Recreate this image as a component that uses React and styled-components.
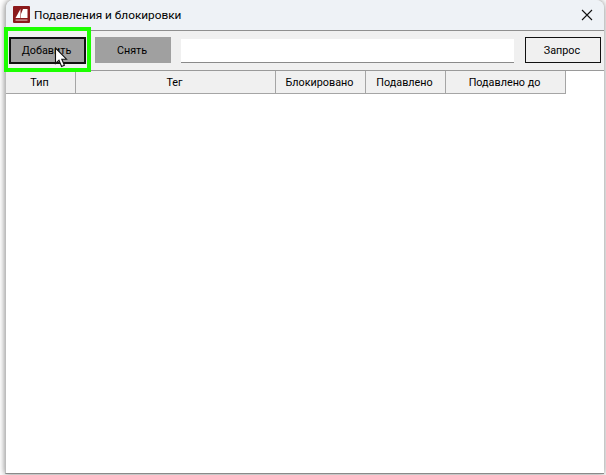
import styled, { createGlobalStyle } from "styled-components"

const GlobalStyle = createGlobalStyle`
  html, body { margin: 0; padding: 0; background: #fff; }
  body { font-family: Roboto, "Noto Sans", sans-serif; }
`

const Stage = styled.div`
  position: relative;
  width: 606px;
  height: 475px;
  overflow: hidden;
  background: #fff;
  padding: 0 2px 1px 5px;
  box-sizing: border-box;
`

const Window = styled.div`
  width: 599px;
  height: 474px;
  display: flex;
  flex-direction: column;
  background: #f0f0f0;
  border-radius: 8px 8px 0 0;
  border-bottom: 1px solid #8a8a8a;
  border-left: 1px solid #bdbdbd;
  box-shadow: 0 0 6px rgba(0, 0, 0, 0.5);
  box-sizing: border-box;
  overflow: hidden;
`

const TitleBar = styled.div`
  height: 31px;
  flex: none;
  display: flex;
  align-items: center;
  gap: 4px;
  padding: 0 11px 1px 7px;
  box-sizing: border-box;
  background: #eef2f6;
  border-bottom: 1px solid #8f8f8f;
`

const TitleText = styled.span`
  flex: 1;
  font-size: 11.8px;
  color: #000;
`

const Toolbar = styled.div`
  height: 39px;
  flex: none;
  display: flex;
  align-items: flex-start;
  padding: 6px 0 0 3px;
  box-sizing: border-box;
`

const Button = styled.button`
  width: ${p => p.$width}px;
  height: ${p => p.$height || 26}px;
  margin-right: ${p => p.$gap || 0}px;
  padding: 0 2px 0 0;
  flex: none;
  font-family: inherit;
  font-size: 10.8px;
  color: #000;
  background: ${p => p.$bg};
  border: ${p => p.$border};
`

const SearchInput = styled.div`
  width: 333px;
  height: 24px;
  margin: 2px 11px 0 0;
  flex: none;
  background: #fff;
  border-bottom: 1px solid #8a8a8a;
  box-sizing: border-box;
`

const TableArea = styled.div`
  flex: 1;
  background: #fff;
  border-top: 1px solid #9a9a9a;
`

const HeaderRow = styled.div`
  display: flex;
  height: 23px;
`

const HeaderCell = styled.div`
  width: ${p => p.$width}px;
  flex: none;
  display: flex;
  align-items: center;
  justify-content: center;
  padding-right: 2px;
  box-sizing: border-box;
  font-size: 10.8px;
  color: #000;
  background: #f0f0f0;
  border-right: 1px solid #a5a5a5;
  border-bottom: 1px solid #a5a5a5;
`

const Highlight = styled.div`
  position: absolute;
  left: 4px;
  top: 27px;
  width: 87px;
  height: 45px;
  border: 4px solid #1cff00;
  box-sizing: border-box;
  pointer-events: none;
`

const Cursor = styled.svg`
  position: absolute;
  left: 54px;
  top: 47px;
`

const columns = [
  { title: "Тип", width: 70 },
  { title: "Тег", width: 200 },
  { title: "Блокировано", width: 90 },
  { title: "Подавлено", width: 80 },
  { title: "Подавлено до", width: 120 },
]

const AppIcon = () => (
  <svg width="17" height="17" viewBox="0 0 17 17">
    <rect width="17" height="17" rx="1" fill="#8b1a1c" />
    <path d="M2.5 12 L7.5 3 V12 Z" fill="#fff" />
    <path d="M10 3 H14.5 V12 H8 V8 Z" fill="#fff" />
    <rect x="2.5" y="13.5" width="12" height="1.2" fill="#d9a8a8" />
  </svg>
)

const CloseIcon = () => (
  <svg width="12" height="12" viewBox="0 0 12 12">
    <path d="M1 1 L11 11 M11 1 L1 11" stroke="#111" strokeWidth="1.1" fill="none" />
  </svg>
)

const App = () => {
  return (
    <Stage>
      <GlobalStyle />
      <Window>
        <TitleBar>
          <AppIcon />
          <TitleText>Подавления и блокировки</TitleText>
          <CloseIcon />
        </TitleBar>
        <Toolbar>
          <Button $width={77} $height={27} $gap={9} $bg="#a0a0a0" $border="2px solid #111">Добавить</Button>
          <Button $width={76} $gap={10} $bg="#a0a0a0" $border="none">Снять</Button>
          <SearchInput />
          <Button $width={76} $bg="#f0f0f0" $border="1px solid #111">Запрос</Button>
        </Toolbar>
        <TableArea>
          <HeaderRow>
            {columns.map(c => (
              <HeaderCell key={c.title} $width={c.width}>{c.title}</HeaderCell>
            ))}
          </HeaderRow>
        </TableArea>
      </Window>
      <Highlight />
      <Cursor width="14" height="21" viewBox="0 0 14 21">
        <path d="M1.5 1 V16.5 L5 13.2 L7.6 19.5 L10.4 18.3 L7.8 12.2 H12.5 Z" fill="#fff" stroke="#111" strokeWidth="1.1" />
      </Cursor>
    </Stage>
  )
}

export default App
